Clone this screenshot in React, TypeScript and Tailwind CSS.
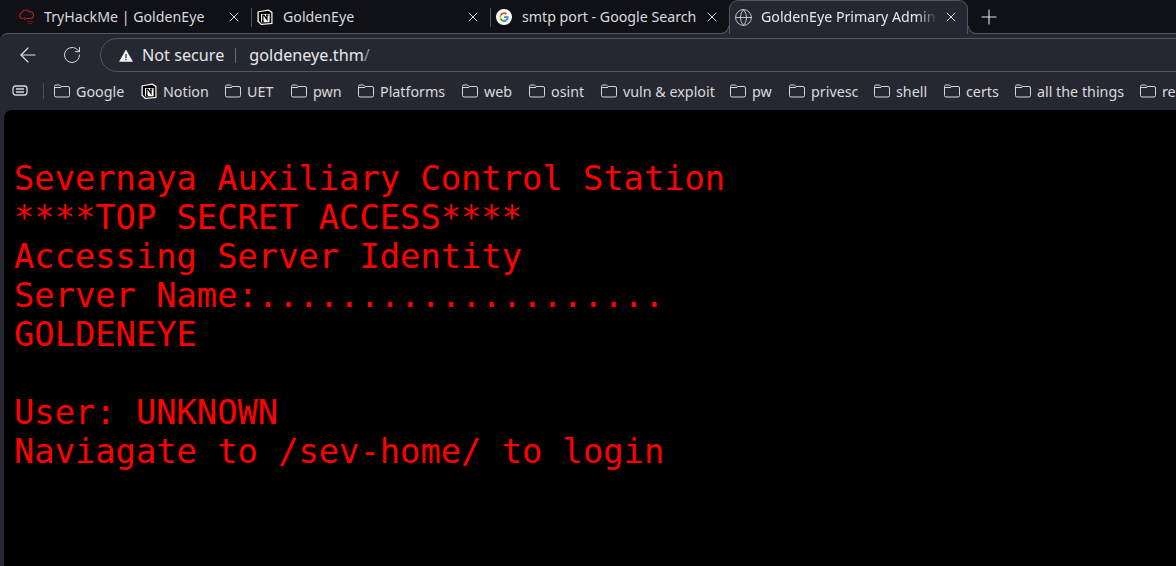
import { Globe, Plus, X, ArrowLeft, RotateCw } from 'lucide-react';

const uiFont = 'font-["Noto_Sans",sans-serif]';

function FolderIcon() {
  return (
    <svg width="16" height="16" viewBox="0 0 16 16" fill="none" stroke="#d5d6da" strokeWidth="1" className="shrink-0">
      <path d="M0.500 3.500a1.500 1.500 0 0 1 1.500-1.500h3.500l1.500 1.500h7a1.500 1.500 0 0 1 1.500 1.500v7.500a1.500 1.500 0 0 1-1.500 1.500H2a1.500 1.500 0 0 1-1.500-1.500z" />
      <path d="M0.500 4.500h6.500" />
    </svg>
  );
}

function NotionIcon() {
  return (
    <svg width="16" height="16" viewBox="0 0 16 16" className="shrink-0">
      <path d="M0.500 2.500 11.500 0.500 15.500 3v12l-11.500 1-3.500-3.500z" fill="#fff" />
      <path d="M1.800 3.200 11.200 1.700 14.300 3.700v10.400l-9.800.7-2.700-2.800z" fill="#000" />
      <path d="M4 5h8.600v8.300H4z" fill="#fff" />
      <path d="M5.800 12.300V6.200h1.200l3 4.300V6.200M4.800 12.300h2M9 6.200h2.400" fill="none" stroke="#000" strokeWidth="1.300" />
    </svg>
  );
}

function GoogleIcon() {
  return (
    <svg width="16" height="16" viewBox="0 0 16 16" className="shrink-0">
      <circle cx="8" cy="8" r="8" fill="#fff" />
      <path d="M12.600 8.200c0-.4 0-.7-.1-1H8v1.900h2.600a2.300 2.300 0 0 1-1 1.500l1.500 1.200c.9-.9 1.500-2.100 1.500-3.600z" fill="#4285f4" />
      <path d="M8 13c1.300 0 2.400-.4 3.100-1.200l-1.500-1.200c-.4.3-1 .5-1.600.5-1.300 0-2.300-.8-2.700-2L3.700 10.300A5 5 0 0 0 8 13z" fill="#34a853" />
      <path d="M5.300 9.100a3 3 0 0 1 0-2L3.700 5.900a5 5 0 0 0 0 4.400z" fill="#fbbc05" />
      <path d="M8 5c.7 0 1.300.3 1.800.7l1.300-1.300A5 5 0 0 0 3.700 5.900l1.600 1.200C5.700 5.900 6.700 5 8 5z" fill="#ea4335" />
    </svg>
  );
}

function CloudIcon() {
  return (
    <svg width="16" height="16" viewBox="0 0 16 16" fill="none" stroke="#b81f27" strokeWidth="1.100" className="shrink-0 overflow-visible">
      <path d="M4.500 9.500a2.800 2.800 0 0 1-.8-5.500A4.300 4.300 0 0 1 11.400 2.900 3.300 3.300 0 0 1 12.800 9.500H7" />
      <path d="M7 8 5.500 9.500 7 11" strokeWidth="1" />
      <path d="M9 12.500h6M10 14.500h4" strokeWidth="1" stroke="#6e1418" />
    </svg>
  );
}

function Tab({ icon, title, active, divider }: { icon: React.ReactNode; title: string; active?: boolean; divider?: boolean }) {
  return (
    <div
      className={`relative flex w-[239px] shrink-0 items-center ${
        active
          ? 'z-10 h-[34px] rounded-t-[9px] border border-b-0 border-[#55575e] bg-[#262831] pb-[1px] pl-[5px] pr-[8px]'
          : 'h-[33px] pl-[6px] pr-[9px]'
      }`}
    >
      {active && (
        <>
          <span className="absolute -left-[9px] bottom-0 size-[8px] bg-[#262831]">
            <span className="block size-full rounded-br-[8px] border-b border-r border-[#55575e] bg-[#101116]" />
          </span>
          <span className="absolute -right-[9px] bottom-0 size-[8px] bg-[#262831]">
            <span className="block size-full rounded-bl-[8px] border-b border-l border-[#55575e] bg-[#101116]" />
          </span>
        </>
      )}
      <span className="flex w-[16px] shrink-0 justify-center">{icon}</span>
      <span
        className={`ml-[10px] min-w-0 flex-1 overflow-hidden whitespace-nowrap text-[14.2px] ${
          active ? 'text-[#e6e7ea] [mask-image:linear-gradient(to_right,black_88%,transparent)]' : 'text-[#d9dade]'
        }`}
      >
        {title}
      </span>
      <X size={16} strokeWidth={1.4} color="#e4e5e8" className="ml-[5px] shrink-0" />
      {divider && <span className="absolute -right-px top-[8px] h-[19px] w-px bg-[#55575e]" />}
    </div>
  );
}

const bookmarks: { label: string; width: string; notion?: boolean }[] = [
  { label: 'Google', width: 'w-[87px]' },
  { label: 'Notion', width: 'w-[84px]', notion: true },
  { label: 'UET', width: 'w-[66px]' },
  { label: 'pwn', width: 'w-[67px]' },
  { label: 'Platforms', width: 'w-[104px]' },
  { label: 'web', width: 'w-[67px]' },
  { label: 'osint', width: 'w-[72px]' },
  { label: 'vuln & exploit', width: 'w-[129px]' },
  { label: 'pw', width: 'w-[59px]' },
  { label: 'privesc', width: 'w-[85px]' },
  { label: 'shell', width: 'w-[70px]' },
  { label: 'certs', width: 'w-[71px]' },
  { label: 'all the things', width: 'w-[125px]' },
  { label: 'resources', width: 'w-[100px]' },
];

const lines = [
  '',
  'Severnaya Auxiliary Control Station',
  '****TOP SECRET ACCESS****',
  'Accessing Server Identity',
  'Server Name:....................',
  'GOLDENEYE',
  '',
  'User: UNKNOWN',
  'Naviagate to /sev-home/ to login',
];

export default function App() {
  return (
    <div className={`flex h-[566px] w-[1176px] flex-col overflow-hidden bg-[#101116] ${uiFont}`}>
      {/* Tab strip */}
      <div className="flex h-[33px] shrink-0 items-start pl-[12px]">
        <Tab icon={<CloudIcon />} title="TryHackMe | GoldenEye" divider />
        <Tab icon={<NotionIcon />} title="GoldenEye" divider />
        <Tab icon={<GoogleIcon />} title="smtp port - Google Search" />
        <Tab icon={<Globe size={19} strokeWidth={1.1} color="#d5d6da" className="shrink-0" />} title="GoldenEye Primary Admin Server" active />
        <Plus size={24} strokeWidth={1.100} color="#e4e5e8" className="ml-[9px] mt-[5px]" />
      </div>

      <div className="flex min-h-0 flex-1 flex-col rounded-tl-[8px] border-t border-[#55575e] bg-[#262831]">
        {/* Toolbar */}
        <div className="flex h-[38px] shrink-0 items-end pl-[16px]">
          <div className="flex h-[34px] items-center">
            <ArrowLeft size={24} strokeWidth={1.100} color="#e4e5e8" />
            <RotateCw size={20} strokeWidth={1.200} color="#d5d6da" className="ml-[22px]" />
          </div>
          <div className="ml-[18px] -mr-[20px] flex h-[34px] flex-1 items-center rounded-[17px] border border-[#55575e] pl-[18px] text-[16.2px]">
            <svg width="14" height="13" viewBox="0 0 14 13" className="shrink-0">
              <path d="M7 0.500 14 12.800H0z" fill="#f1f1f3" />
              <path d="M6.400 5h1.200v4.200H6.400zM6.400 10h1.200v1.300H6.400z" fill="#262831" />
            </svg>
            <span className="ml-[9px] text-[#e4e5e8]">Not secure</span>
            <span className="ml-[11px] h-[15px] w-px bg-[#6a6c73]" />
            <span className="ml-[13px] text-[#e8e9ec]">
              goldeneye.thm<span className="text-[#8e9097]">/</span>
            </span>
          </div>
        </div>

        {/* Bookmarks */}
        <div className="flex h-[38px] shrink-0 items-center overflow-hidden pl-[12px] text-[14.3px] text-[#d9dade]">
          <svg width="17" height="14" viewBox="0 0 17 14" fill="none" stroke="#d5d6da" strokeWidth="1.300" className="shrink-0">
            <rect x="1" y="2" width="14" height="9" rx="2.500" />
            <path d="M4 5h8M4 8h8" />
          </svg>
          <span className="ml-[14px] mr-[10px] h-[16px] w-px shrink-0 bg-[#4a4c53]" />
          {bookmarks.map((b) => (
            <div key={b.label} className={`flex shrink-0 items-center gap-[6px] whitespace-nowrap ${b.width}`}>
              {b.notion ? <NotionIcon /> : <FolderIcon />}
              <span className="pt-[2px]">{b.label}</span>
            </div>
          ))}
        </div>

        {/* Page */}
        <div className="ml-[4px] min-h-0 flex-1 rounded-tl-[8px] bg-black pl-[10px] font-['DejaVu_Sans_Mono',monospace] text-[33.75px] text-[#ff0000]">
          <div className="h-[10px]" />
          {lines.map((line, i) => (
            <div key={i} className="h-[39px] whitespace-pre leading-[39px]">
              {line}
            </div>
          ))}
        </div>
      </div>
    </div>
  );
}
